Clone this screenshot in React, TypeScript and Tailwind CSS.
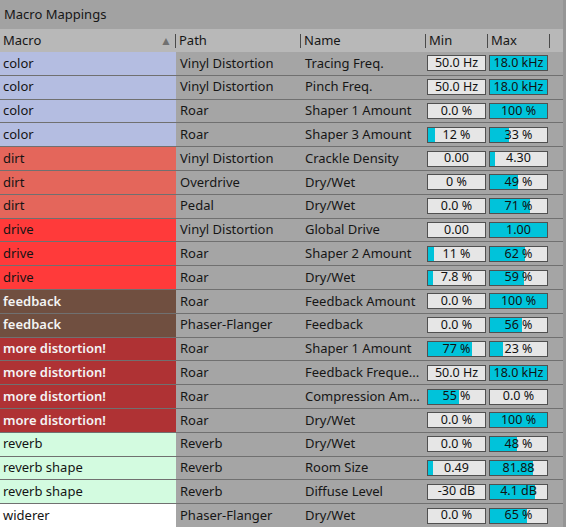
import React from 'react';

type Row = {
    macro: string;
    path: string;
    name: string;
    min: string;
    minFill: number;
    max: string;
    maxFill: number;
};

const macroColors: Record<string, string> = {
    color: 'bg-[#b4bde1] text-[#141414]',
    dirt: 'bg-[#e4665b] text-[#141414]',
    drive: 'bg-[#ff3a3a] text-[#141414]',
    feedback: 'bg-[#704f40] text-[#f4f4f4] font-semibold',
    'more distortion!': 'bg-[#af3234] text-[#f4f4f4] font-semibold',
    reverb: 'bg-[#d3fbe0] text-[#141414]',
    'reverb shape': 'bg-[#d3fbe0] text-[#141414]',
    widerer: 'bg-white text-[#141414]',
};

const rows: Row[] = [
    { macro: 'color', path: 'Vinyl Distortion', name: 'Tracing Freq.', min: '50.0 Hz', minFill: 0, max: '18.0 kHz', maxFill: 100 },
    { macro: 'color', path: 'Vinyl Distortion', name: 'Pinch Freq.', min: '50.0 Hz', minFill: 0, max: '18.0 kHz', maxFill: 100 },
    { macro: 'color', path: 'Roar', name: 'Shaper 1 Amount', min: '0.0 %', minFill: 0, max: '100 %', maxFill: 100 },
    { macro: 'color', path: 'Roar', name: 'Shaper 3 Amount', min: '12 %', minFill: 12, max: '33 %', maxFill: 33 },
    { macro: 'dirt', path: 'Vinyl Distortion', name: 'Crackle Density', min: '0.00', minFill: 0, max: '4.30', maxFill: 8 },
    { macro: 'dirt', path: 'Overdrive', name: 'Dry/Wet', min: '0 %', minFill: 0, max: '49 %', maxFill: 49 },
    { macro: 'dirt', path: 'Pedal', name: 'Dry/Wet', min: '0.0 %', minFill: 0, max: '71 %', maxFill: 71 },
    { macro: 'drive', path: 'Vinyl Distortion', name: 'Global Drive', min: '0.00', minFill: 0, max: '1.00', maxFill: 100 },
    { macro: 'drive', path: 'Roar', name: 'Shaper 2 Amount', min: '11 %', minFill: 11, max: '62 %', maxFill: 62 },
    { macro: 'drive', path: 'Roar', name: 'Dry/Wet', min: '7.8 %', minFill: 8, max: '59 %', maxFill: 59 },
    { macro: 'feedback', path: 'Roar', name: 'Feedback Amount', min: '0.0 %', minFill: 0, max: '100 %', maxFill: 100 },
    { macro: 'feedback', path: 'Phaser-Flanger', name: 'Feedback', min: '0.0 %', minFill: 0, max: '56 %', maxFill: 56 },
    { macro: 'more distortion!', path: 'Roar', name: 'Shaper 1 Amount', min: '77 %', minFill: 77, max: '23 %', maxFill: 23 },
    { macro: 'more distortion!', path: 'Roar', name: 'Feedback Freque...', min: '50.0 Hz', minFill: 0, max: '18.0 kHz', maxFill: 100 },
    { macro: 'more distortion!', path: 'Roar', name: 'Compression Am...', min: '55 %', minFill: 55, max: '0.0 %', maxFill: 0 },
    { macro: 'more distortion!', path: 'Roar', name: 'Dry/Wet', min: '0.0 %', minFill: 0, max: '100 %', maxFill: 100 },
    { macro: 'reverb', path: 'Reverb', name: 'Dry/Wet', min: '0.0 %', minFill: 0, max: '48 %', maxFill: 48 },
    { macro: 'reverb shape', path: 'Reverb', name: 'Room Size', min: '0.49', minFill: 8, max: '81.88', maxFill: 76 },
    { macro: 'reverb shape', path: 'Reverb', name: 'Diffuse Level', min: '-30 dB', minFill: 0, max: '4.1 dB', maxFill: 79 },
    { macro: 'widerer', path: 'Phaser-Flanger', name: 'Dry/Wet', min: '0.0 %', minFill: 0, max: '65 %', maxFill: 65 },
];

const cols = 'grid grid-cols-[176px_125px_125px_62px_62px_1fr]';

function ValueBox({ value, fill }: { value: string; fill: number }) {
    return (
        <div className="relative ml-[1px] h-[16px] w-[59px] border border-[#505050] bg-[#e6e6e6]">
            <div className="absolute inset-y-0 left-0 bg-[#00c3da]" style={{ width: `${fill}%` }} />
            <div className="relative flex h-full items-center justify-center whitespace-nowrap text-[12.5px] leading-none text-[#111]">
                {value}
            </div>
        </div>
    );
}

function HeaderCell({ label, sort }: { label: string; sort?: boolean }) {
    return (
        <div className="flex h-full items-center">
            <span className="pl-[3px]">{label}</span>
            {sort && <span className="ml-auto mr-[3px] text-[12px] text-[#707070]">▲</span>}
            <span className={`${sort ? '' : 'ml-auto'} h-[14px] w-px bg-[#4a4a4a]`} />
        </div>
    );
}

export default function App() {
    return (
        <div
            className="h-[527px] w-[566px] overflow-hidden bg-[#a5a5a5] text-[13px] text-[#161616] border-r-[3px] border-[#959595]"
            style={{ fontFamily: "'Noto Sans', 'Open Sans', sans-serif" }}
        >
            <div className="flex h-[29px] items-center bg-[#a2a2a2] pl-[4px] text-[13px]">Macro Mappings</div>
            <div className={`${cols} h-[23px] bg-[#b8b8b8]`}>
                <HeaderCell label="Macro" sort />
                <HeaderCell label="Path" />
                <HeaderCell label="Name" />
                <HeaderCell label="Min" />
                <HeaderCell label="Max" />
                <div />
            </div>
            {rows.map((r, i) => (
                <div key={i} className={`${cols} h-[23.8px] border-b border-[#707070]`}>
                    <div className={`flex items-center pl-[3px] ${macroColors[r.macro]}`}>{r.macro}</div>
                    <div className="flex items-center pl-[4px]">{r.path}</div>
                    <div className="flex items-center pl-[4px] whitespace-nowrap">{r.name}</div>
                    <div className="flex items-center">
                        <ValueBox value={r.min} fill={r.minFill} />
                    </div>
                    <div className="flex items-center">
                        <ValueBox value={r.max} fill={r.maxFill} />
                    </div>
                    <div />
                </div>
            ))}
        </div>
    );
}
